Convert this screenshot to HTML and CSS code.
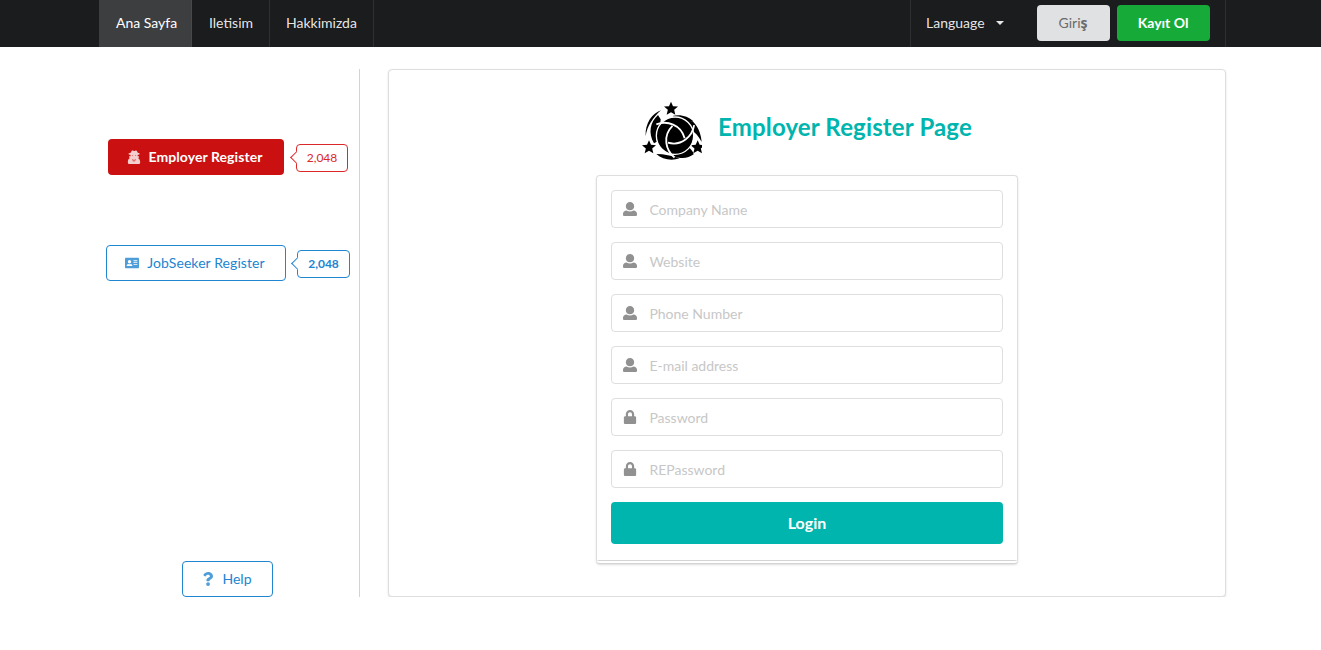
FILE: index.html
```html
<!DOCTYPE html>
<html lang="tr">
<head>
<meta charset="utf-8">
<title>Employer Register</title>
<link rel="stylesheet" href="styles.css">
</head>
<body>
<nav class="menu">
  <div class="container menu-inner">
    <a class="item active first">Ana Sayfa</a>
    <a class="item second">Iletisim</a>
    <a class="item third">Hakkimizda</a>
    <div class="menu-right">
      <a class="language">Language <span class="caret"></span></a>
      <button class="button login">Giri<span class="cedilla">ş</span></button>
      <button class="button signup">Kayıt Ol</button>
    </div>
  </div>
</nav>
<main class="container layout">
  <aside class="sidebar">
    <div class="labeled red">
      <button class="button">
        <svg class="icon" viewBox="0 0 448 512"><path fill="currentColor" d="M384 308l24-62c4-11-4-22-15-22h-42c7-14 11-30 11-48 39-8 70-19 70-32 0-16-27-31-70-39-9-32-27-60-41-77-9-12-26-16-39-9l-28 14c-9 5-20 5-29 0L182 19c-14-7-30-3-40 9-13 17-31 45-40 77-43 8-80 23-80 39 0 13 31 24 70 32 0 18 4 34 11 48H56c-12 0-19 12-15 22l26 60C27 330 0 373 0 422v45c0 25 20 45 45 45h358c25 0 45-20 45-45v-45c0-48-26-90-64-114z"/><path class="icon-cut" d="M144 204h46l-14 18h-20zm114 0h46l-14 18h-20zM165 325l32 22 12 25-18 64zm118 0l-32 22-12 25 18 64z"/></svg>
        Employer Register
      </button>
      <span class="count">2,048</span>
    </div>
    <div class="labeled blue">
      <button class="button">
        <svg class="icon" viewBox="0 0 512 512"><path fill="currentColor" fill-rule="evenodd" d="M40 64h432c22 0 40 18 40 40v304c0 22-18 40-40 40H40c-22 0-40-18-40-40V104c0-22 18-40 40-40zM165 150a62 62 0 1 0 0 124 62 62 0 0 0 0-124zM60 362h210c0-42-26-68-62-70-27 12-59 12-86 0-36 2-62 28-62 70zM310 158v32h142v-32zm0 70v32h142v-32zm0 70v32h142v-32z"/></svg>
        JobSeeker Register
      </button>
      <span class="count">2,048</span>
    </div>
    <button class="button help">
      <svg class="icon" viewBox="0 0 384 512"><path fill="currentColor" d="M202 0C122 0 70 33 29 91c-7 11-5 25 5 33l43 33c11 8 26 6 34-4 25-32 43-50 82-50 30 0 67 19 67 48 0 22-18 33-47 50-34 19-79 43-79 102v9c0 13 11 24 24 24h72c13 0 24-11 24-24v-6c0-41 120-43 120-154C374 69 287 0 202 0zm-8 373a69 69 0 1 0 0 139 69 69 0 0 0 0-139z"/></svg>
      Help
    </button>
  </aside>
  <section class="segment page">
    <h2 class="header">
      <svg class="logo" viewBox="0 0 180 180">
        <defs>
          <path id="star" d="M0-21 6-7.500 21-6.500 9.500 3.500 13 18 0 10.500-13 18-9.500 3.500-21-6.500-6-7.500z"/>
          <path id="seam" d="M-56-34C-24-46 18-34 29 8"/>
        </defs>
        <use href="#star" transform="translate(87 23)"/>
        <use href="#star" transform="translate(21 139)"/>
        <use href="#star" transform="translate(167 139)"/>
        <path d="M57 28C31 38 9 65 11 106C15 75 34 48 57 28zM48 42C24 64 18 96 36 127L50 119 56 55z"/>
        <path d="M92 45C114 39 139 46 154 61L112 64zM125 62L136 54C152 53 177 84 179 123C169 104 158 92 146 86z"/>
        <path d="M43 159C67 159 88 164 113 172C89 180 61 176 43 159zM92 164L140 139C148 146 154 153 155 160C138 173 116 175 92 164z"/>
        <circle class="ball" cx="99" cy="104" r="56"/>
        <g class="seams" transform="translate(99 104)">
          <use href="#seam"/>
          <use href="#seam" transform="rotate(120)"/>
          <use href="#seam" transform="rotate(240)"/>
        </g>
      </svg>
      <span>Employer Register Page</span>
    </h2>
    <form class="segment form">
      <label class="field"><svg class="icon" viewBox="0 0 512 512"><use href="#user"/></svg><input placeholder="Company Name"></label>
      <label class="field"><svg class="icon" viewBox="0 0 512 512"><use href="#user"/></svg><input placeholder="Website"></label>
      <label class="field"><svg class="icon" viewBox="0 0 512 512"><use href="#user"/></svg><input placeholder="Phone Number"></label>
      <label class="field"><svg class="icon" viewBox="0 0 512 512"><use href="#user"/></svg><input placeholder="E-mail address"></label>
      <label class="field"><svg class="icon" viewBox="0 0 448 512"><use href="#lock"/></svg><input placeholder="Password"></label>
      <label class="field"><svg class="icon" viewBox="0 0 448 512"><use href="#lock"/></svg><input placeholder="REPassword"></label>
      <button class="button submit" type="button">Login</button>
    </form>
  </section>
</main>
<svg class="symbols" width="0" height="0">
  <defs>
    <path id="user" fill="currentColor" d="M256 0c88.400 0 152 63.600 152 152s-63.600 152-152 152-152-63.600-152-152S167.600 0 256 0zM132 310c72 51 176 51 248 0 75 0 132 54 132 124v30c0 26.500-21.500 48-48 48H48c-26.500 0-48-21.500-48-48v-30c0-70 57-124 132-124z"/>
    <path id="lock" fill="currentColor" d="M400 224h-24v-72C376 68.200 307.800 0 224 0S72 68.200 72 152v72H48c-26.500 0-48 21.500-48 48v192c0 26.500 21.500 48 48 48h352c26.500 0 48-21.500 48-48V272c0-26.500-21.500-48-48-48zm-104 0H152v-72c0-39.700 32.300-72 72-72s72 32.300 72 72v72z"/>
  </defs>
</svg>
</body>
</html>
```
FILE: styles.css
```css
* { box-sizing: border-box; }
body {
  margin: 0;
  background: #fff;
  color: rgba(0, 0, 0, .87);
  font: 14px/20px Lato, "Liberation Sans", sans-serif;
}
.container { width: 1127px; margin-left: 99px; }
.menu { height: 47px; background: #1b1c1d; }
.menu-inner { display: flex; height: 47px; }
.item {
  display: flex;
  align-items: center;
  padding: 0 0 2px 16px;
  border-right: 1px solid #2e2f30;
  color: rgba(255, 255, 255, .9);
}
.first { width: 93px; padding-left: 17px; }
.second { width: 78px; padding-left: 17px; }
.third { width: 104px; }
.active { background: #3d3e3f; color: #fff; border-color: #47484a; }
.menu-right {
  display: flex;
  align-items: center;
  width: 316px;
  margin-left: auto;
  padding: 0 15px;
  border: solid #2e2f30;
  border-width: 0 1px;
}
.language { display: flex; align-items: center; margin-bottom: 2px; color: rgba(255, 255, 255, .9); }
.caret { margin-left: 11px; border: solid transparent; border-width: 4px 4px 0; border-top-color: currentColor; }
.button {
  display: flex;
  align-items: center;
  justify-content: center;
  height: 36px;
  padding: 0;
  border: 0;
  border-radius: 4px;
  font: 700 14px/14px Lato, "Liberation Sans", sans-serif;
}
.login { width: 73px; margin-left: 33px; background: #e0e1e2; color: #6a6b6c; font-weight: 400; }
.cedilla { font-family: "Open Sans", sans-serif; font-weight: 700; }
.signup { width: 93px; margin-left: 7px; background: #16ab39; color: #fff; }
.menu-right .button { margin-bottom: 1px; }

.layout { display: flex; margin-top: 22px; height: 528px; }
.sidebar {
  display: flex;
  flex-direction: column;
  width: 261px;
  padding: 70px 0 0 7px;
  border-right: 1px solid #d4d4d5;
}
.labeled { display: flex; align-items: center; }
.labeled .icon { width: 14px; height: 14px; margin-right: 7px; opacity: .8; }
.icon-cut { fill: #ca1010; }
.red { padding-left: 2px; }
.red .button { width: 176px; padding-right: 2px; background: #ca1010; color: #fff; letter-spacing: .08px; }
.red .count { margin-left: 12px; width: 52px; color: #db2828; }
.blue { margin-top: 70px; color: #2185d0; }
.blue .button, .help { border: 1px solid #2185d0; background: #fff; color: #2185d0; font-weight: 400; }
.blue .button { width: 180px; padding-right: 2px; letter-spacing: .08px; }
.blue .button .icon { margin-right: 8px; }
.blue .count { margin-left: 11px; width: 53px; font-weight: 700; }
.count {
  position: relative;
  height: 28px;
  margin-top: 1px;
  border: 1px solid currentColor;
  border-radius: 4px;
  font-size: 12px;
  line-height: 26px;
  text-align: center;
}
.count::before {
  content: "";
  position: absolute;
  left: -5px;
  top: 8px;
  width: 8px;
  height: 8px;
  border: solid currentColor;
  border-width: 0 0 1px 1px;
  background: #fff;
  transform: rotate(45deg);
}
.help { width: 91px; margin: auto 0 0 76px; padding-right: 1px; }
.help .icon { width: 12px; height: 14px; margin-right: 8px; opacity: .8; }

.segment { border: 1px solid #dededf; border-radius: 4px; background: #fff; box-shadow: 0 1px 2px rgba(34, 36, 38, .15); }
.page { width: 838px; margin-left: 28px; padding-top: 31px; }
.header {
  display: flex;
  align-items: flex-start;
  justify-content: center;
  height: 74px;
  margin: 0;
  color: #00b5ad;
  font: 700 24px/31px Lato, "Liberation Sans", sans-serif;
  letter-spacing: .15px;
}
.header span { margin: 10px 0 0 16px; }
.logo { width: 60px; height: 60px; }
.ball { stroke: #fff; stroke-width: 4px; }
.seams { fill: none; stroke: #fff; stroke-width: 5.5px; }
.form {
  width: 422px;
  height: 389px;
  margin: 0 auto;
  padding: 14px;
  border-bottom: 4px double #d4d4d5;
}
.field {
  display: flex;
  align-items: center;
  height: 38px;
  margin-bottom: 14px;
  border: 1px solid #dededf;
  border-radius: 4px;
}
.field .icon { width: 14px; height: 14px; margin: 0 12px 0 11.4px; color: #919191; }
.field input { flex: 1; min-width: 0; padding: 0; border: 0; outline: 0; font: 14px/17px Lato, "Liberation Sans", sans-serif; }
.field input::placeholder { color: #c7c7c7; }
.submit { width: 100%; height: 42px; background: #00b5ad; color: #fff; font-size: 16px; }
.symbols { position: absolute; }
```
